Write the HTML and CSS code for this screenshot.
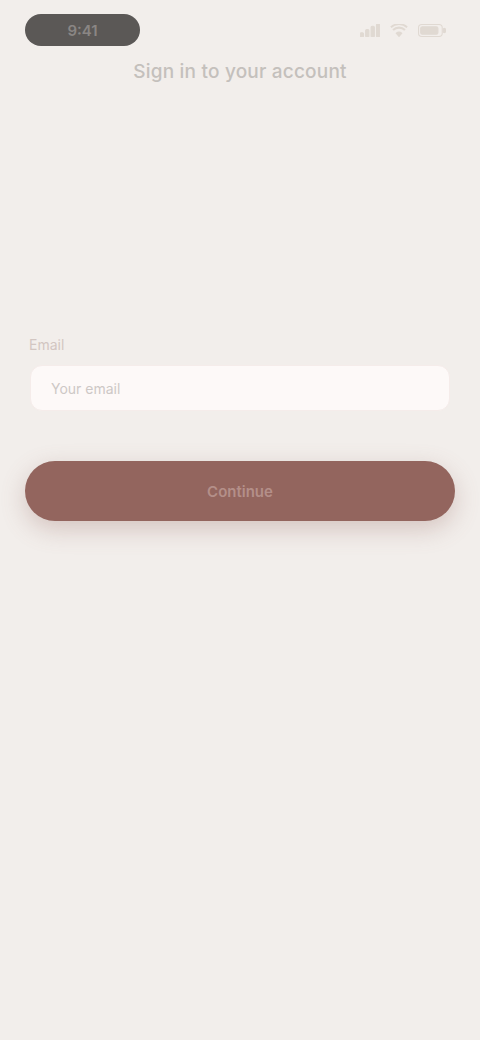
FILE: index.html
```html
<!DOCTYPE html>
<html lang="en">
<head>
<meta charset="utf-8">
<title>Sign in</title>
<link rel="stylesheet" href="styles.css">
</head>
<body>
<div class="screen">
  <header class="status">
    <div class="pill">9:41</div>
    <div class="icons">
      <svg width="20" height="13" viewBox="0 0 18 12"><rect x="0" y="8" width="3" height="4" rx="1"/><rect x="5" y="5" width="3" height="7" rx="1"/><rect x="10" y="2" width="3" height="10" rx="1"/><rect x="15" y="0" width="3" height="12" rx="1"/></svg>
      <svg width="18" height="13" viewBox="0 0 16 12"><path d="M8 11.5 L5.5 8.5 A4 4 0 0 1 10.5 8.5 Z"/><path d="M2.5 5.5 A8 8 0 0 1 13.5 5.5" fill="none" stroke-width="2"/><path d="M0.5 3 A11 11 0 0 1 15.5 3" fill="none" stroke-width="1.6"/></svg>
      <svg width="28" height="13" viewBox="0 0 26 12"><rect x="0.5" y="0.5" width="22" height="11" rx="3" fill="none" stroke-width="1"/><rect x="2.5" y="2.5" width="16" height="7" rx="1.5"/><rect x="23.5" y="4" width="2" height="4" rx="1"/></svg>
    </div>
  </header>
  <h1 class="title">Sign in to your account</h1>
  <main class="form">
    <label class="label" for="email">Email</label>
    <div class="field"><input id="email" type="email" placeholder="Your email"></div>
    <button class="btn" type="button">Continue</button>
  </main>
</div>
</body>
</html>
```
FILE: styles.css
```css
* { box-sizing: border-box; }
html, body { margin: 0; padding: 0; }
body {
  background: #f2eeeb;
  font-family: Inter, "Noto Sans", sans-serif;
  color: #3f3b39;
}
.screen {
  width: 480px;
  min-height: 1040px;
  display: flex;
  flex-direction: column;
}
.status {
  display: flex;
  justify-content: space-between;
  align-items: center;
  padding: 14px 34px 0 25px;
}
.pill {
  width: 115px;
  height: 32px;
  border-radius: 16px;
  background: #5b5856;
  color: #8a8684;
  font-size: 15px;
  font-weight: 600;
  display: flex;
  align-items: center;
  justify-content: center;
}
.icons {
  display: flex;
  gap: 10px;
  align-items: center;
  fill: #e0d9d2;
  stroke: #e0d9d2;
}
.title {
  margin: 14px 0 0;
  text-align: center;
  font-size: 19px;
  font-weight: 500;
  color: #c4c0bc;
  letter-spacing: 0.2px;
}
.form {
  display: flex;
  flex-direction: column;
  padding: 0 25px;
  margin-top: 253px;
}
.label {
  font-size: 14px;
  color: #d2c6c2;
  padding-left: 4px;
  margin-bottom: 12px;
}
.field {
  margin: 0 5px;
}
.field input {
  width: 100%;
  height: 46px;
  border: 1px solid #f5ecea;
  border-radius: 12px;
  background: #fdf9f8;
  padding: 0 20px;
  font-family: inherit;
  font-size: 14px;
  color: #3f3b39;
  outline: none;
}
.field input::placeholder { color: #cdc8c6; }
.btn {
  margin-top: 50px;
  height: 60px;
  width: 100%;
  border: none;
  border-radius: 30px;
  background: #93655e;
  color: #b48f89;
  font-family: inherit;
  font-size: 15px;
  font-weight: 600;
  box-shadow: 0 8px 24px rgba(147, 101, 94, 0.3);
}
```
